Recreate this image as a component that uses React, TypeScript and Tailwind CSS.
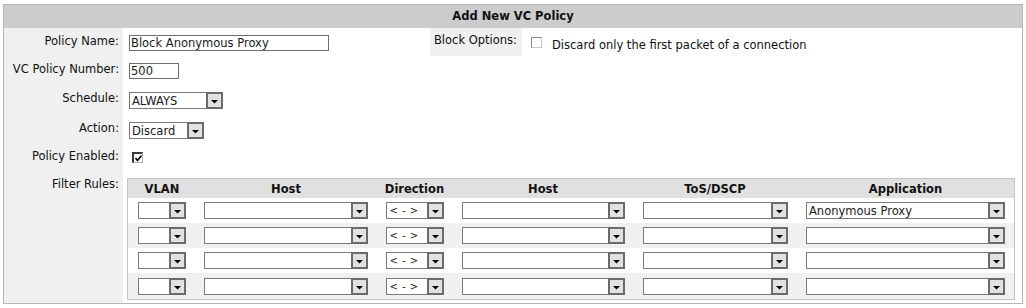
import React from "react";

function Arrow() {
  return (
    <svg width="7" height="4" viewBox="0 0 7 4" className="block">
      <polygon points="0,0 7,0 3.5,3.5" fill="#000" />
    </svg>
  );
}

function Sel({ className, value, small }: { className: string; value?: string; small?: boolean }) {
  return (
    <div className={`flex h-[17px] border border-[#7a7a7a] bg-white ${className}`}>
      <span
        className={
          small
            ? "flex-1 overflow-hidden whitespace-nowrap pl-[3px] text-[10px] leading-[15px] tracking-[0.5px] text-[#222]"
            : "flex-1 overflow-hidden whitespace-nowrap pl-[2px] text-[11.5px] leading-[16px] text-[#1a1a1a]"
        }
      >
        {value}
      </span>
      <span className="-my-px -mr-px flex w-[17px] items-end justify-center border-2 border-[#6b6b6b] bg-[#e2e2e2] pb-[3px]">
        <Arrow />
      </span>
    </div>
  );
}

function Label({ children, pt }: { children: React.ReactNode; pt: string }) {
  return <div className={`bg-[#f0f0f0] pr-[4px] text-right ${pt}`}>{children}</div>;
}

const cols = "grid grid-cols-[68px_180px_77px_180px_164px_217px] justify-items-center items-center";

function FilterRow({ bg, h, app }: { bg: string; h: string; app?: string }) {
  return (
    <div className={`${cols} ${bg} ${h}`}>
      <Sel className="w-[48px]" />
      <Sel className="w-[164px]" />
      <Sel className="w-[58px]" value="< - >" small />
      <Sel className="w-[163px]" />
      <Sel className="w-[145px]" />
      <Sel className="w-[199px]" value={app} />
    </div>
  );
}

export default function App() {
  return (
    <div className="min-h-[308px] bg-white pl-[3px] pt-[4px] font-['DejaVu_Sans',sans-serif] text-[11.5px] leading-[15px] text-[#111]">
      <div className="flex h-[300px] w-[1020px] flex-col border border-[#b5b5b5]">
        <div className="flex h-[23px] items-center justify-center bg-[#cccccc] font-bold">Add New VC Policy</div>
        <div className="grid flex-1 grid-cols-[119px_1fr] grid-rows-[28px_29px_30px_30px_26px_1fr]">
          {/* Row 1 */}
          <Label pt="pt-[6px]">Policy Name:</Label>
          <div className="flex">
            <div className="w-[307px] pl-[6px] pt-[7px]">
              <div className="h-[16px] w-[200px] border border-[#6e6e6e] pl-[1px] text-[11.5px] leading-[15px] text-[#1a1a1a]">
                Block Anonymous Proxy
              </div>
            </div>
            <div className="w-[92px] bg-[#f0f0f0] pr-[5px] pt-[5px] text-right">Block Options:</div>
            <div className="flex items-start pl-[9px] pt-[9px]">
              <span className="h-[11px] w-[11px] border border-t-[#8a8a8a] border-l-[#8a8a8a] border-r-[#c8c8c8] border-b-[#c8c8c8] bg-white" />
              <span className="ml-[10px] mt-[1px]">Discard only the first packet of a connection</span>
            </div>
          </div>

          {/* Row 2 */}
          <Label pt="pt-[6px]">VC Policy Number:</Label>
          <div className="pl-[6px] pt-[7px]">
            <div className="h-[16px] w-[50px] border border-[#6e6e6e] pl-[1px] text-[11.5px] leading-[15px] text-[#1a1a1a]">500</div>
          </div>

          {/* Row 3 */}
          <Label pt="pt-[6px]">Schedule:</Label>
          <div className="pl-[6px] pt-[7px]">
            <Sel className="w-[94px]" value="ALWAYS" />
          </div>

          {/* Row 4 */}
          <Label pt="pt-[6px]">Action:</Label>
          <div className="pl-[6px] pt-[7px]">
            <Sel className="w-[75px]" value="Discard" />
          </div>

          {/* Row 5 */}
          <Label pt="pt-[4px]">Policy Enabled:</Label>
          <div className="pl-[9px] pt-[7px]">
            <span className="flex h-[11px] w-[11px] items-center justify-center border-l-2 border-t-2 border-r border-b border-l-[#3a3a3a] border-t-[#3a3a3a] border-r-[#b0b0b0] border-b-[#b0b0b0] bg-white">
              <svg width="7" height="7" viewBox="0 0 7 7" className="block">
                <polyline points="0.5,3 2.5,5.5 6.5,0.5" fill="none" stroke="#000" strokeWidth="1.6" />
              </svg>
            </span>
          </div>

          {/* Row 6 */}
          <Label pt="pt-[6px]">Filter Rules:</Label>
          <div className="pl-[4px] pt-[7px]">
            <div className="w-[888px] border border-[#c4c4c4]">
              <div className={`${cols} h-[19px] bg-[#e0e0e0] pt-[1px] font-bold`}>
                <span>VLAN</span>
                <span>Host</span>
                <span>Direction</span>
                <span>Host</span>
                <span>ToS/DSCP</span>
                <span>Application</span>
              </div>
              <FilterRow bg="bg-white" h="h-[25px]" app="Anonymous Proxy" />
              <FilterRow bg="bg-[#f0f0f0]" h="h-[25px]" />
              <FilterRow bg="bg-white" h="h-[25px]" />
              <FilterRow bg="bg-[#f0f0f0]" h="h-[26px]" />
            </div>
          </div>
        </div>
      </div>
    </div>
  );
}
